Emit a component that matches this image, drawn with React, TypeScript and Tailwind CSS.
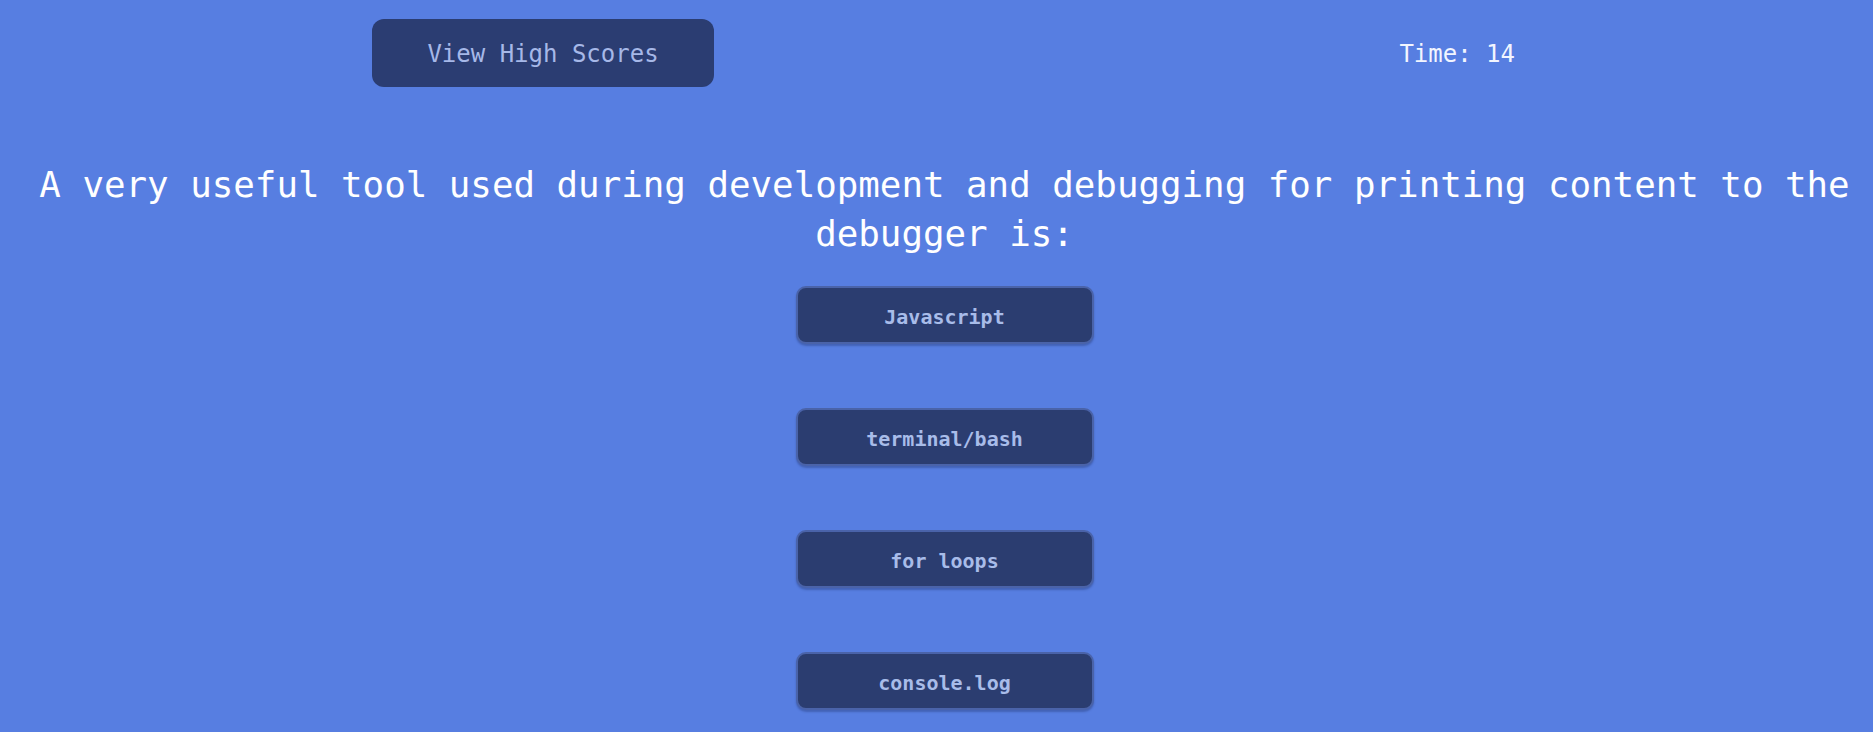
import { useState } from 'react';

const answers = ['Javascript', 'terminal/bash', 'for loops', 'console.log'];

export default function App() {
  const [time] = useState(14);

  return (
    <div
      className="min-h-[732px] w-full bg-[#577ee1] text-white"
      style={{ fontFamily: '"DejaVu Sans Mono", "Liberation Mono", monospace' }}
    >
      {/* Header */}
      <header className="flex items-center justify-between pl-[372px] pr-[358px] pt-[19px]">
        <button className="h-[68px] w-[342px] rounded-xl bg-[#2b3d72] pt-[2px] text-[24px] text-[#a6b8e8]">
          View High Scores
        </button>
        <span className="pt-[2px] text-[24px] text-[#f2f5ff]">Time: {time}</span>
      </header>

      {/* Question */}
      <main className="flex flex-col items-center pl-4">
        <h2 className="mt-[73px] text-center text-[35.8px] leading-[49px]">
          A very useful tool used during development and debugging for printing content to the debugger is:
        </h2>

        <div className="mt-[28px] flex flex-col items-center gap-[64px]">
          {answers.map((a) => (
            <button
              key={a}
              className="h-[58px] w-[298px] rounded-[10px] border-2 border-[#4a63a9] bg-[#2b3d70] pt-[3px] text-[20px] font-bold text-[#a8bce9] shadow-[0_2px_2px_rgba(30,45,100,0.35)]"
            >
              {a}
            </button>
          ))}
        </div>
      </main>
    </div>
  );
}
